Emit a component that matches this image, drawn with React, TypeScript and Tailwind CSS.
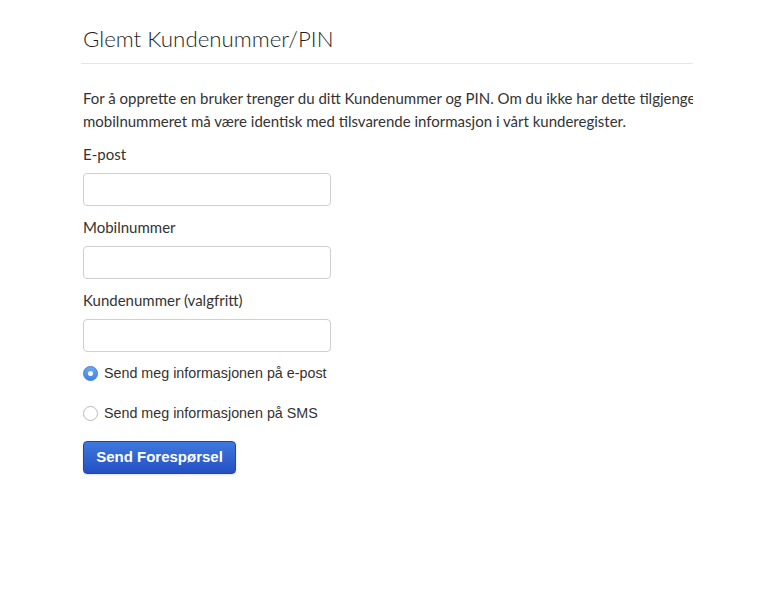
import React, { useState } from "react";

const avenir = { fontFamily: "Lato, 'Noto Sans', sans-serif" };
const helvetica = { fontFamily: "'Liberation Sans', Arial, sans-serif" };

function Radio({ checked, onSelect, label }: any) {
  return (
    <label className="flex items-center gap-[6px] cursor-pointer" onClick={onSelect}>
      <span
        className={
          checked
            ? "w-[15px] h-[15px] rounded-full bg-gradient-to-b from-[#6ea8f5] to-[#3b82ec] border border-[#3a7be0] flex items-center justify-center"
            : "w-[15px] h-[15px] rounded-full bg-white border border-[#b9b9b9]"
        }
      >
        {checked && <span className="w-[5px] h-[5px] rounded-full bg-white" />}
      </span>
      <span>{label}</span>
    </label>
  );
}

export default function App() {
  const [method, setMethod] = useState("epost");

  return (
    <div className="min-h-[594px] bg-white text-[#333]">
      <div className="w-[612px] ml-[81px] pt-[24px]">
        <h1
          className="text-[22.3px] font-light text-[#1f1f1f] leading-[30px] pl-[2px] pb-[9px] border-b border-[#e5e5e5]"
          style={avenir}
        >
          Glemt Kundenummer/PIN
        </h1>

        <div
          className="mt-[23px] pl-[2px] text-[15px] leading-[23px] overflow-hidden whitespace-nowrap"
          style={avenir}
        >
          <div>
            For å opprette en bruker trenger du ditt Kundenummer og PIN. Om du ikke har dette tilgjengelig, kan du be om å få det tilsendt. E-post og
          </div>
          <div>mobilnummeret må være identisk med tilsvarende informasjon i vårt kunderegister.</div>
        </div>

        <form className="pl-[2px] mt-[10px]" onSubmit={(e) => e.preventDefault()}>
          {["E-post", "Mobilnummer", "Kundenummer (valgfritt)"].map((label, i) => (
            <div key={i} className="mb-[10px]">
              <label className="block text-[15px] leading-[22px] mb-[8px]" style={avenir}>
                {label}
              </label>
              <input
                type="text"
                className="block w-[248px] h-[33px] rounded-[4px] border border-[#cfcfcf] bg-white px-2 outline-none"
              />
            </div>
          ))}

          <div className="mt-[11px] flex flex-col gap-[20px] text-[14.3px] leading-[20px]" style={helvetica}>
            <Radio
              checked={method === "epost"}
              onSelect={() => setMethod("epost")}
              label="Send meg informasjonen på e-post"
            />
            <Radio
              checked={method === "sms"}
              onSelect={() => setMethod("sms")}
              label="Send meg informasjonen på SMS"
            />
          </div>

          <button
            type="submit"
            className="mt-[18px] w-[153px] h-[33px] rounded-[4px] border border-[#1f47a8] bg-gradient-to-b from-[#3f78df] to-[#2450c2] text-white text-[15px] font-bold shadow-sm"
            style={helvetica}
          >
            Send Forespørsel
          </button>
        </form>
      </div>
    </div>
  );
}
